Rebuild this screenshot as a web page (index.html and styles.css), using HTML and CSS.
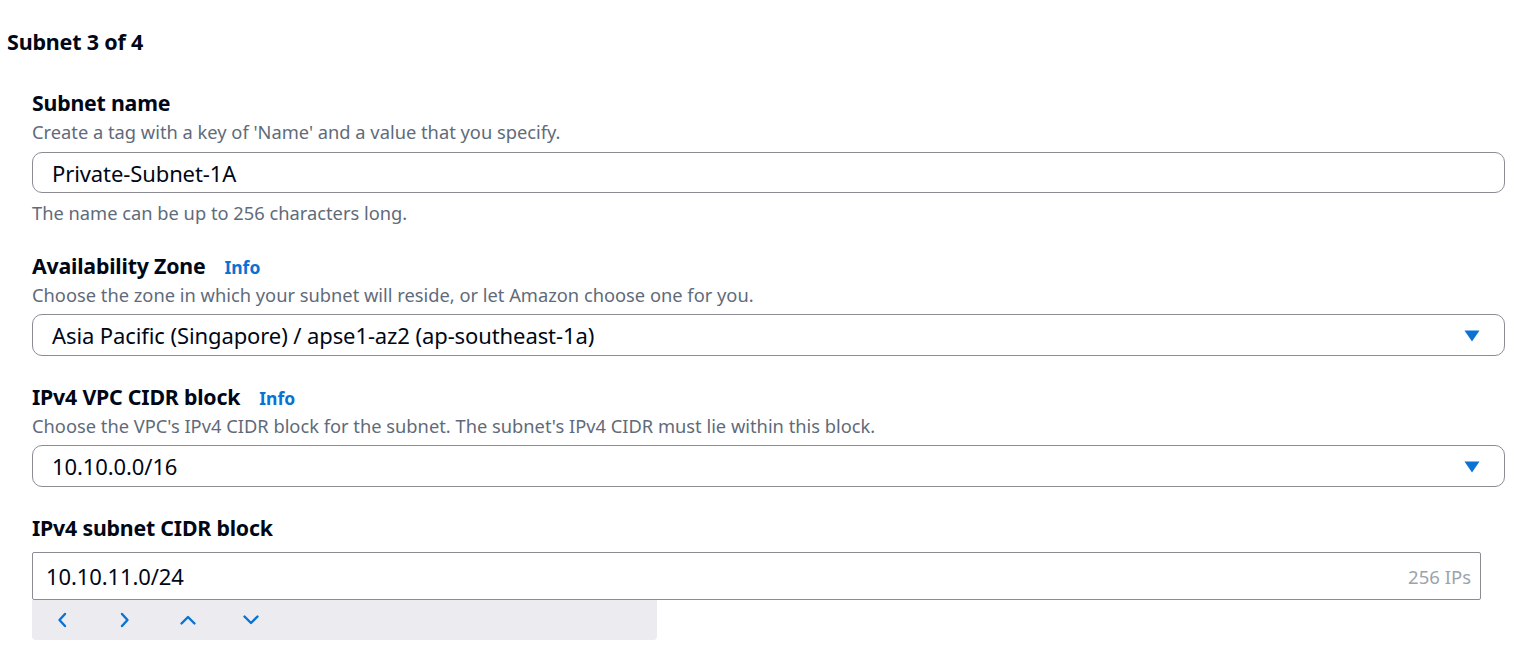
FILE: index.html
```html
<!DOCTYPE html>
<html lang="en">
<head>
<meta charset="utf-8">
<title>Subnet 3 of 4</title>
<link rel="stylesheet" href="styles.css">
</head>
<body>
<div class="page">
  <h2 class="section-title">Subnet 3 of 4</h2>
  <div class="fields">
    <div class="field field-name">
      <div class="label-row"><span class="label">Subnet name</span></div>
      <div class="desc">Create a tag with a key of 'Name' and a value that you specify.</div>
      <div class="control rounded"><span class="value">Private-Subnet-1A</span></div>
      <div class="hint">The name can be up to 256 characters long.</div>
    </div>
    <div class="field field-az">
      <div class="label-row"><span class="label">Availability Zone</span><a class="info">Info</a></div>
      <div class="desc">Choose the zone in which your subnet will reside, or let Amazon choose one for you.</div>
      <div class="control rounded select"><span class="value">Asia Pacific (Singapore) / apse1-az2 (ap-southeast-1a)</span>
        <svg class="caret" width="16" height="12" viewBox="0 0 16 12"><path d="M0.5 0.5 H15.5 L8 11.5 Z" fill="#0972d3"/></svg>
      </div>
    </div>
    <div class="field field-vpc">
      <div class="label-row"><span class="label">IPv4 VPC CIDR block</span><a class="info">Info</a></div>
      <div class="desc">Choose the VPC's IPv4 CIDR block for the subnet. The subnet's IPv4 CIDR must lie within this block.</div>
      <div class="control rounded select"><span class="value">10.10.0.0/16</span>
        <svg class="caret" width="16" height="12" viewBox="0 0 16 12"><path d="M0.5 0.5 H15.5 L8 11.5 Z" fill="#0972d3"/></svg>
      </div>
    </div>
    <div class="field field-cidr">
      <div class="label-row"><span class="label">IPv4 subnet CIDR block</span></div>
      <div class="control square"><span class="value">10.10.11.0/24</span><span class="count">256 IPs</span></div>
      <div class="stepper">
        <button class="step" aria-label="left"><svg width="12" height="16" viewBox="0 0 12 16"><path d="M9 2 L3.5 8 L9 14" fill="none" stroke="#0972d3" stroke-width="2.4" stroke-linecap="round" stroke-linejoin="round"/></svg></button>
        <button class="step" aria-label="right"><svg width="12" height="16" viewBox="0 0 12 16"><path d="M3 2 L8.5 8 L3 14" fill="none" stroke="#0972d3" stroke-width="2.4" stroke-linecap="round" stroke-linejoin="round"/></svg></button>
        <button class="step" aria-label="up"><svg width="18" height="12" viewBox="0 0 18 12"><path d="M2.5 9.5 L9 3 L15.5 9.5" fill="none" stroke="#0972d3" stroke-width="2.4" stroke-linecap="round" stroke-linejoin="round"/></svg></button>
        <button class="step" aria-label="down"><svg width="18" height="12" viewBox="0 0 18 12"><path d="M2.5 2.5 L9 9 L15.5 2.5" fill="none" stroke="#0972d3" stroke-width="2.4" stroke-linecap="round" stroke-linejoin="round"/></svg></button>
      </div>
    </div>
  </div>
</div>
</body>
</html>
```
FILE: styles.css
```css
* { box-sizing: border-box; }
html, body { margin: 0; padding: 0; background: #ffffff; }
body {
  font-family: "Noto Sans", "Open Sans", Arial, sans-serif;
  color: #000716;
}
.page {
  width: 1523px;
  height: 671px;
  overflow: hidden;
  padding: 29px 18px 0 7px;
}
.section-title {
  margin: 0;
  font-size: 21.5px;
  line-height: 26px;
  font-weight: 700;
  letter-spacing: -0.2px;
}
.fields {
  padding: 0 0 0 25px;
  margin-top: 34px;
  display: flex;
  flex-direction: column;
}
.field { display: flex; flex-direction: column; }
.label-row {
  display: flex;
  align-items: baseline;
  gap: 19px;
  height: 28px;
}
.label {
  font-size: 21.3px;
  font-weight: 700;
  line-height: 28px;
  letter-spacing: -0.2px;
}
.info {
  font-size: 17.5px;
  font-weight: 700;
  color: #0972d3;
}
.desc {
  font-size: 18.3px;
  line-height: 24px;
  color: #5f6b7a;
  margin-top: 3px;
}
.hint {
  font-size: 18.3px;
  line-height: 24px;
  color: #5f6b7a;
  margin-top: 8px;
}
.control {
  display: flex;
  align-items: center;
  border: 1.5px solid #8c8c94;
  background: #fff;
  margin-top: 7px;
}
.rounded {
  height: 42px;
  border-radius: 10px;
  padding: 0 24px 0 19px;
  width: 1473px;
}
.field-name .rounded { margin-top: 8px; height: 41px; }
.value {
  font-size: 22px;
  color: #000716;
  letter-spacing: -0.1px;
}
.select { justify-content: space-between; }
.caret { display: block; margin-top: 1px; }
.field-az { margin-top: 27px; }
.field-vpc { margin-top: 27px; }
.field-cidr { margin-top: 27px; }
.square {
  height: 48px;
  width: 1449px;
  border-radius: 2px;
  padding: 0 9px 0 13px;
  justify-content: space-between;
  margin-top: 10px;
}
.count {
  font-size: 18.5px;
  color: #9ba3ad;
}
.stepper {
  width: 625px;
  height: 40px;
  background: #ebebf0;
  border-radius: 0 0 4px 4px;
  display: flex;
  align-items: center;
  padding-left: 9px;
  gap: 21px;
}
.step {
  border: 0;
  background: none;
  width: 42px;
  height: 30px;
  padding: 0;
  display: flex;
  align-items: center;
  justify-content: center;
}
.step svg { display: block; }
```
